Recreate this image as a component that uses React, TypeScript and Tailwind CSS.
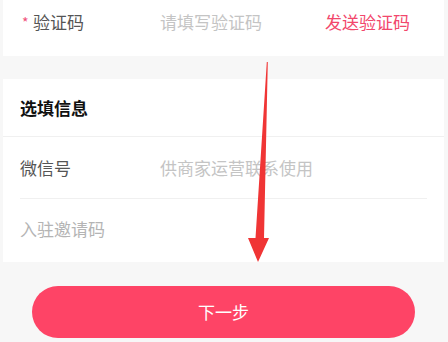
import React from "react";

const font = { fontFamily: '"Noto Sans CJK SC", "Noto Sans", sans-serif' };

export default function App() {
  return (
    <div className="relative w-[448px] h-[342px] overflow-hidden bg-[#f7f7f7]" style={font}>
      <div className="ml-[3px] mr-[4px] h-[56px] bg-white flex items-start pt-[9px]">
        <div className="flex items-center h-[26px] w-full">
          <span className="w-[30px] pl-[19px] text-[#f0507a] text-[14px] leading-none">*</span>
          <span className="w-[127px] text-[17px] text-[#555]">验证码</span>
          <span className="flex-1 text-[17px] text-[#c4c4c4]">请填写验证码</span>
          <span className="pr-[34px] text-[17px] text-[#f2476c]">发送验证码</span>
        </div>
      </div>
      <div className="mt-[23px] ml-[3px] mr-[4px] h-[183px] bg-white flex flex-col">
        <div className="h-[58px] flex items-center px-[17px] border-b border-[#f0f0f0]">
          <span className="text-[17px] font-bold text-[#111]">选填信息</span>
        </div>
        <div className="mx-[17px] h-[62px] flex items-center border-b border-[#f0f0f0]">
          <span className="w-[140px] text-[17px] text-[#555]">微信号</span>
          <span className="text-[17px] text-[#c4c4c4]">供商家运营联系使用</span>
        </div>
        <div className="mx-[17px] flex-1 flex items-center pb-[3px]">
          <span className="text-[17px] text-[#b4b4b4]">入驻邀请码</span>
        </div>
      </div>
      <div className="mt-[24px] px-[32px]">
        <button className="w-[383px] h-[52px] rounded-full bg-[#fe4466] text-white text-[17px] flex items-center justify-center">
          下一步
        </button>
      </div>
      <svg className="absolute left-0 top-0 pointer-events-none" width="448" height="342" viewBox="0 0 448 342">
        <polygon
          points="267.8,62 266.8,62 255.5,238 248,238 258,262 269,238 264,238"
          fill="#f03535"
        />
      </svg>
    </div>
  );
}
